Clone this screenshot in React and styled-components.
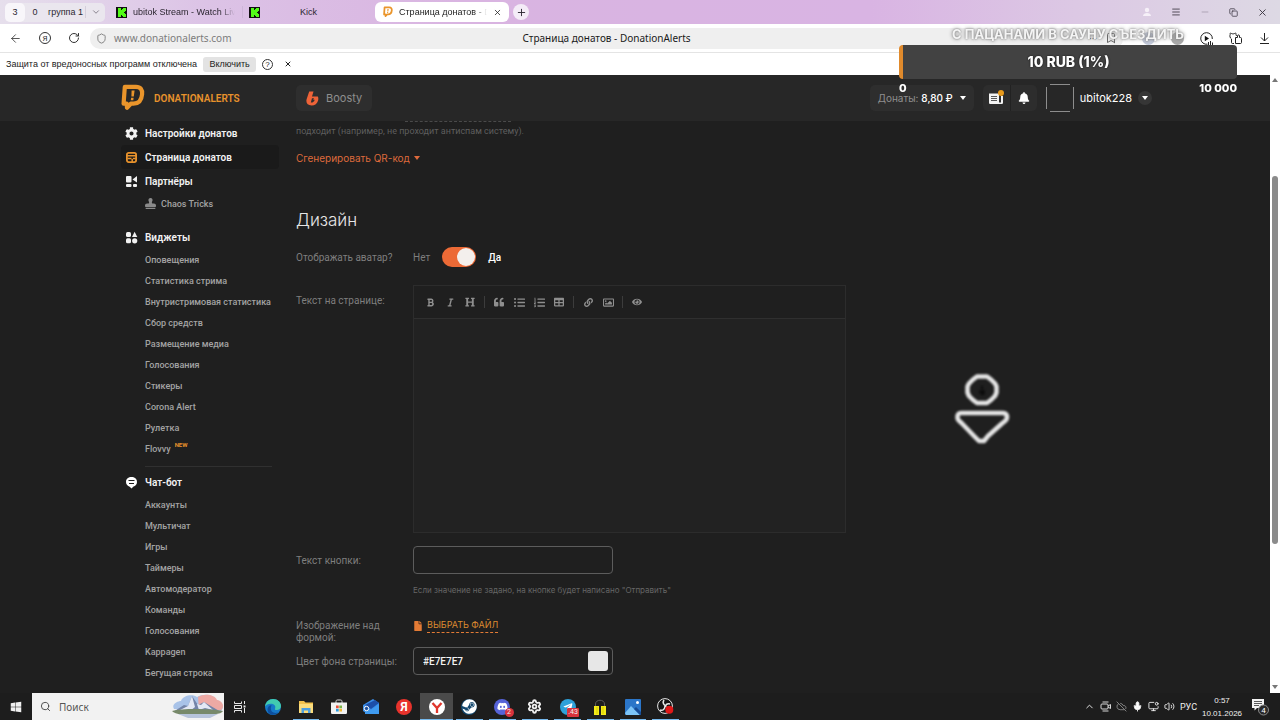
import React, { useState } from 'react';
import styled, { createGlobalStyle, css } from 'styled-components';
import {
  FaBold, FaItalic, FaHeading, FaQuoteLeft, FaListUl, FaListOl, FaTable, FaLink, FaRegImage, FaEye,
  FaCog, FaFile, FaBell, FaStamp, FaDiscord, FaSteam, FaTelegramPlane, FaWindows,
} from 'react-icons/fa';
import {
  ArrowLeft, RotateCw, Shield, X, Plus, ChevronDown, ChevronUp, Menu, Minus, Copy, Bookmark,
  Search, Mic, Volume2, CloudOff, Settings, MonitorDot,
} from 'lucide-react';

const GlobalStyle = createGlobalStyle`
  * {
    box-sizing: border-box;
  }
  body {
    margin: 0;
    background: #1f1f1f;
    font-family: Roboto, 'Liberation Sans', sans-serif;
  }
  button, input, textarea {
    font: inherit;
    color: inherit;
    margin: 0;
  }
  button {
    display: flex;
    align-items: center;
    justify-content: center;
    padding: 0;
    border: 0;
    background: none;
    cursor: pointer;
  }
  a {
    color: inherit;
    text-decoration: none;
  }
  svg {
    display: block;
    flex: none;
  }
`;

const Desktop = styled.div`
  display: flex;
  flex-direction: column;
  height: 100vh;
  overflow: hidden;
`;

/* browser */

const TabStrip = styled.div`
  display: flex;
  align-items: center;
  height: 24px;
  padding: 0 12px 0 5px;
  background: linear-gradient(90deg, #e6dfec 0%, #dcc3e6 16%, #d9b4e1 36%, #d9b4e3 68%, #dcc8e4 84%, #ddd9e4 100%);
  font-family: 'Liberation Sans', sans-serif;
  font-size: 9px;
  color: #2b2630;
`;

const TabGroup = styled.div`
  display: flex;
  align-items: center;
  height: 19px;
  width: 100px;
  margin-right: 11px;
  border-radius: 5px;
  background: #eae6ee;
`;

const GroupCount = styled.span`
  width: 20px;
  line-height: 19px;
  text-align: center;
  border-radius: 5px;
  background: ${(props) => (props.$active ? '#f8f6fa' : 'none')};
`;

const GroupName = styled.span`
  flex: 1;
  padding-left: 3px;
  white-space: nowrap;
`;

const GroupArrow = styled.button`
  width: 20px;
  height: 12px;
  border-left: 1px solid #d5cfdb;
  color: #77717d;
`;

const Tab = styled.div`
  display: flex;
  align-items: center;
  gap: 6px;
  width: ${(props) => props.$width}px;
  height: 20px;
  white-space: nowrap;
  overflow: hidden;
  ${(props) => props.$active && css`
    padding: 0 7px 0 8px;
    border-radius: 6px;
    background: #fff;
    color: #1c1c1c;
  `}
`;

const TabTitle = styled.span`
  flex: 1;
  overflow: hidden;
  text-align: ${(props) => (props.$center ? 'center' : 'left')};
  mask-image: ${(props) => (props.$fade ? 'linear-gradient(90deg, #000 85%, transparent)' : 'none')};
`;

const TabDivider = styled.span`
  width: 1px;
  height: 12px;
  margin: 0 6px 0 7px;
  background: #cdb5d8;
`;

const NewTab = styled.button`
  width: 16px;
  height: 16px;
  margin-left: 4px;
  border-radius: 50%;
  background: #f4ecf7;
`;

const WindowButtons = styled.div`
  display: flex;
  align-items: center;
  gap: 19px;
  margin-left: auto;
  color: #3a3440;
`;

const AddressBar = styled.div`
  display: flex;
  align-items: center;
  height: 29px;
  padding: 0 9px;
  background: #fff;
  border-bottom: 1px solid #e4e4e4;
  color: #222;
`;

const BarButtons = styled.div`
  display: flex;
  align-items: center;
  gap: ${(props) => props.$gap || 17}px;
  color: #333;
`;

const AddressField = styled.div`
  flex: 1;
  display: flex;
  align-items: center;
  gap: 6px;
  height: 21px;
  margin: 0 19px 0 10px;
  padding: 0 6px;
  border-radius: 10px;
  background: #efefef;
  font-family: 'Noto Sans', sans-serif;
  font-size: 10px;
`;

const Url = styled.span`
  flex: 1;
  display: flex;
  align-items: center;
  gap: 7px;
  color: #7c7c7c;
`;

const PageTitle = styled.span`
  color: #1a1a1a;
`;

const FieldTail = styled.div`
  flex: 1;
  display: flex;
  justify-content: flex-end;
  align-items: center;
  gap: 8px;
  color: #666;
`;

const Notice = styled.div`
  display: flex;
  align-items: center;
  gap: 6px;
  height: 22px;
  padding: 0 6px;
  background: #fff;
  color: #222;
  font-family: 'Liberation Sans', sans-serif;
  font-size: 9px;
`;

const NoticeButton = styled.button`
  height: 15px;
  width: 53px;
  border-radius: 3px;
  background: #e3e3e3;
`;

const HelpButton = styled.button`
  width: 11px;
  height: 11px;
  margin-right: 5px;
  border: 1px solid #333;
  border-radius: 50%;
  font-size: 8px;
  line-height: 9px;
`;

const Viewport = styled.div`
  flex: 1;
  display: flex;
  min-height: 0;
`;

const Scrollbar = styled.div`
  display: flex;
  flex-direction: column;
  align-items: center;
  width: 10px;
  padding: 3px 0 4px;
  background: #fff;
`;

const ScrollTrack = styled.div`
  flex: 1;
  display: grid;
  grid-template-rows: 93fr 366fr 140fr;
`;

const ScrollThumb = styled.div`
  grid-row: 2;
  width: 6px;
  border-radius: 3px;
  background: #8b8b8b;
`;

const Caret = styled.span`
  width: 0;
  height: 0;
  border: 3px solid transparent;
  ${(props) => (props.$up
    ? css`border-top: 0; border-bottom: 4px solid currentColor;`
    : css`border-bottom: 0; border-top: 4px solid currentColor;`)}
`;

const ScrollArrow = styled(Caret)`
  color: #777;
`;

/* site */

const Site = styled.div`
  position: relative;
  flex: 1;
  min-width: 0;
  overflow: hidden;
  background: #1f1f1f;
`;

const SiteHeader = styled.header`
  background: #272727;
`;

const HeaderInner = styled.div`
  display: flex;
  align-items: center;
  max-width: 1034px;
  height: 46px;
  margin: 0 auto;
  padding-left: 3px;
`;

const Brand = styled.a`
  display: flex;
  align-items: center;
  gap: 9px;
  width: 175px;
  color: #e8922c;
  font-size: 10px;
  font-weight: 600;
`;

const HeaderButton = styled.button`
  gap: 7px;
  height: 26px;
  padding: 0 ${(props) => (props.$large ? 10 : 8)}px;
  border-radius: 5px;
  background: #2e2e2e;
  color: #8f8f8f;
  font-family: Inter, sans-serif;
  font-size: ${(props) => (props.$large ? 11 : 10)}px;
  b {
    font-weight: 500;
    color: #fff;
  }
`;

const HeaderRight = styled.div`
  display: flex;
  align-items: center;
  gap: 9px;
  margin-left: auto;
  color: #fff;
`;

const IconPair = styled.div`
  display: flex;
  border-radius: 5px;
  background: #2d2d2d;
`;

const IconButton = styled.button`
  position: relative;
  width: 27px;
  height: 26px;
  & + & {
    border-left: 1px solid #222;
  }
`;

const NewsDot = styled.i`
  position: absolute;
  top: 5px;
  right: 6px;
  width: 6px;
  height: 6px;
  border-radius: 50%;
  background: #e89a1c;
`;

const UserButton = styled.button`
  gap: 6px;
  font-family: Inter, sans-serif;
  font-size: 11px;
`;

const CaretCircle = styled.span`
  display: flex;
  align-items: center;
  justify-content: center;
  width: 14px;
  height: 14px;
  border-radius: 50%;
  background: #363636;
`;

const Columns = styled.div`
  display: flex;
  gap: 17px;
  max-width: 1028px;
  margin: 0 auto;
`;

const Sidebar = styled.nav`
  width: 158px;
  flex: none;
`;

const NavMain = styled.a`
  display: flex;
  align-items: center;
  gap: 7px;
  height: 24px;
  padding-left: 4px;
  border-radius: 4px;
  background: ${(props) => (props.$active ? '#1a1a1a' : 'none')};
  color: #f2f2f2;
  font-size: 10px;
  font-weight: 600;
`;

const NavSub = styled.a`
  display: flex;
  align-items: center;
  gap: 5px;
  height: 21px;
  padding-left: 24px;
  color: #a3a3a3;
  font-size: 9px;
  font-weight: 500;
  white-space: nowrap;
`;

const NavGroup = styled.div`
  & + & {
    margin-top: 11px;
  }
`;

const NavLine = styled.hr`
  height: 1px;
  margin: 7px 7px 3px 24px;
  border: 0;
  background: #303030;
`;

const NewBadge = styled.sup`
  align-self: flex-start;
  margin-left: -1px;
  color: #e8922c;
  font-size: 6px;
  font-weight: 700;
  line-height: 14px;
`;

const Content = styled.main`
  flex: 1;
  color: #7e7e7e;
  font-size: 10px;
`;

const Intro = styled.p`
  margin: 0;
  padding-top: 3px;
  line-height: 12px;
  font-size: 9px;
  color: #5e5e5e;
`;

const CutLink = styled.a`
  display: block;
  width: 106px;
  margin-left: 109px;
  border-bottom: 1px dashed #4a4a4a;
`;

const QrButton = styled.button`
  gap: 4px;
  margin-top: 14px;
  height: 14px;
  color: #de6a3c;
  font-family: Inter, sans-serif;
  font-size: 10px;
`;

const Heading = styled.h2`
  margin: 43px 0 15px;
  color: #e6e6e6;
  font-family: Inter, sans-serif;
  font-size: 17px;
  font-weight: 300;
  line-height: 24px;
`;

const Field = styled.div`
  display: grid;
  grid-template-columns: 117px 1fr;
  align-items: ${(props) => (props.$top ? 'start' : 'center')};
  margin-bottom: ${(props) => props.$gap || 0}px;
`;

const Label = styled.label`
  padding: ${(props) => props.$offset || 2}px 20px 0 0;
  line-height: 12px;
  white-space: ${(props) => (props.$wrap ? 'normal' : 'nowrap')};
`;

const SwitchRow = styled.div`
  display: flex;
  align-items: center;
  gap: 12px;
  b {
    color: #fff;
    font-weight: 500;
  }
`;

const Switch = styled.input`
  appearance: none;
  display: flex;
  align-items: center;
  justify-content: flex-start;
  width: 34px;
  height: 20px;
  padding: 1px;
  border-radius: 10px;
  background: #555;
  cursor: pointer;
  &::before {
    content: '';
    width: 18px;
    height: 18px;
    border-radius: 50%;
    background: #f3efec;
  }
  &:checked {
    justify-content: flex-end;
    background: #ec6a36;
  }
`;

const Editor = styled.div`
  display: flex;
  flex-direction: column;
  max-width: 433px;
  height: 248px;
  border: 1px solid #2c2c2c;
`;

const EditorTools = styled.div`
  display: flex;
  align-items: center;
  height: 33px;
  padding-left: 6px;
  border-bottom: 1px solid #2f2f2f;
  color: #8f8f8f;
`;

const ToolButton = styled.button`
  width: 20px;
  height: 20px;
`;

const ToolDivider = styled.span`
  width: 1px;
  height: 12px;
  margin: 0 4px;
  background: #3c3c3c;
`;

const EditorText = styled.textarea`
  flex: 1;
  padding: 8px;
  border: 0;
  outline: 0;
  resize: none;
  background: #222;
`;

const TextBox = styled.div`
  display: flex;
  align-items: center;
  width: 200px;
  height: 28px;
  padding: 0 4px 0 9px;
  border: 1px solid #5c5c5c;
  border-radius: 4px;
  color: #f2f2f2;
  input {
    flex: 1;
    min-width: 0;
    padding: 0;
    border: 0;
    outline: 0;
    background: none;
    font-size: 10px;
    font-weight: 500;
  }
`;

const Swatch = styled.button`
  width: 20px;
  height: 20px;
  border-radius: 3px;
  background: ${(props) => props.$color};
`;

const Hint = styled.p`
  margin: 0 0 22px 117px;
  line-height: 12px;
  font-family: Inter, sans-serif;
  font-size: 8px;
  color: #666;
`;

const FileButton = styled.button`
  gap: 4px;
  color: #e37b35;
  font-family: Inter, sans-serif;
  span {
    border-bottom: 1px dashed #e37b35;
    color: #dd8a30;
    font-size: 9px;
    line-height: 14px;
  }
`;

const PageMark = styled.div`
  position: absolute;
  top: 298px;
  right: 259px;
  filter: blur(1px);
`;

/* stream goal, drawn over the window */

const Goal = styled.section`
  position: fixed;
  top: 26px;
  right: 43px;
  width: 338px;
  color: #fff;
  font-family: Inter, sans-serif;
  font-weight: 700;
  text-align: center;
`;

const GoalTitle = styled.div`
  color: #f4f4f4;
  font-size: 13px;
  line-height: 16px;
  margin-bottom: 3px;
  text-shadow: 0 0 2px #777, 0 0 4px #888;
`;

const GoalBar = styled.div`
  height: 34px;
  line-height: 34px;
  padding-right: 3px;
  border-left: 4px solid #e08a2c;
  border-radius: 4px;
  background: #424242;
  font-size: 14px;
  font-weight: 800;
  text-shadow: 0 0 2px #111;
`;

const GoalScale = styled.div`
  display: flex;
  justify-content: space-between;
  line-height: 18px;
  font-size: 11px;
  font-weight: 800;
`;

/* taskbar */

const Taskbar = styled.footer`
  display: flex;
  align-items: stretch;
  height: 27px;
  background: #1d1d1d;
  color: #f0f0f0;
`;

const TaskButton = styled.button`
  position: relative;
  min-width: 32px;
  background: ${(props) => (props.$active ? '#4a4a4a' : 'none')};
  ${(props) => props.$open && css`
    &::after {
      content: '';
      position: absolute;
      left: ${props.$active ? 0 : 3}px;
      right: ${props.$active ? 0 : 3}px;
      bottom: 0;
      height: 1px;
      background: #76b9ed;
    }
  `}
`;

const SearchBox = styled.label`
  display: flex;
  align-items: center;
  gap: 8px;
  width: 192px;
  padding-left: 8px;
  background: #f2f2f2;
  color: #444;
  input {
    flex: 1;
    min-width: 0;
    padding: 0;
    border: 0;
    outline: 0;
    background: none;
    font-family: 'Noto Sans', sans-serif;
    font-size: 10px;
    &::placeholder {
      color: #555;
      opacity: 1;
    }
  }
`;

const Apps = styled.div`
  display: grid;
  grid-template-columns: repeat(13, 1fr);
  width: 425px;
  margin-left: 1px;
`;

const AppDisc = styled.span`
  display: flex;
  align-items: center;
  justify-content: center;
  width: ${(props) => props.$size || 16}px;
  height: ${(props) => props.$size || 16}px;
  border-radius: 50%;
  background: ${(props) => props.$color};
  color: #fff;
  font-size: 12px;
  font-weight: 700;
`;

const AppBadge = styled.span`
  position: absolute;
  right: 5px;
  bottom: 3px;
  min-width: 9px;
  padding: 0 1px;
  border-radius: ${(props) => (props.$square ? 1 : 5)}px;
  background: #d8323c;
  font-size: 7px;
  line-height: 9px;
`;

const Tray = styled.div`
  display: flex;
  align-items: center;
  gap: 5px;
  margin-left: auto;
  padding-right: 11px;
  font-size: 9px;
`;

const Clock = styled.time`
  width: 36px;
  margin: 0 6px 0 2px;
  display: flex;
  flex-direction: column;
  align-items: center;
  font-family: 'Liberation Sans', sans-serif;
  font-size: 8px;
  line-height: 13px;
`;

const KickIcon = () => (
  <svg width="11" height="11" viewBox="0 0 11 11" aria-hidden="true">
    <rect width="11" height="11" fill="#101010" />
    <path d="M2 1h3v2h1V2h1V1h3v3H9v1H8v1h1v1h1v3H7V9H6V8H5v2H2z" fill="#53fc18" />
  </svg>
);

const DonationLogo = ({ width, height }) => (
  <svg width={width} height={height} viewBox="0 0 24 28" aria-hidden="true">
    <path
      d="M3.800 2.800H15c4.500 0 6.600 3 6.100 7.500-.5 5.600-3.300 9.400-8.600 9.400H9.800L6 23.800l-.3-4.100H2.600z"
      fill="none" stroke="#ea952b" strokeWidth="4.200" strokeLinejoin="round"
    />
    <path d="M10.600 6.500h3l-.8 6h-2.400zM10.100 13.800h2.500l-.3 2.400H9.800z" fill="#ea952b" />
  </svg>
);

const BoostyLogo = () => (
  <svg width="13" height="15" viewBox="0 0 13 15" aria-hidden="true">
    <path
      d="M3.200.6h4.300L6 5.600h5.800c.6 1 .7 2.300.3 3.800-.8 3.100-3.200 5-6.500 5C1.500 14.400-.3 11.800.6 8.300zM6 7.200l-1.200 4.400c2 .2 3.400-1 3.900-2.900H7.200L8 7.200z"
      fill="#ee6338" fillRule="evenodd"
    />
  </svg>
);

const PageIcon = () => (
  <svg width="13" height="13" viewBox="0 0 13 13" aria-hidden="true">
    <rect x="1.900" y="1.900" width="9.200" height="9.200" rx="1.800" fill="none" stroke="#e8922c" strokeWidth="1.800" />
    <path d="M2 4.800h9M2.500 7.600h4M7.800 7.600h3M7.200 8v3" stroke="#e8922c" strokeWidth="1.500" />
  </svg>
);

const PartnersIcon = () => (
  <svg width="13" height="13" viewBox="0 0 13 13" fill="#f2f2f2" aria-hidden="true">
    <rect x="1" y="1" width="5.500" height="6.500" rx="1" />
    <rect x="1" y="9" width="5.500" height="3" rx="1" />
    <rect x="8" y="9" width="4" height="3" rx="1" />
    <path d="M12 1v6.500L7.500 4.500z" />
  </svg>
);

const WidgetsIcon = () => (
  <svg width="13" height="13" viewBox="0 0 13 13" fill="#f2f2f2" aria-hidden="true">
    <rect x="1" y="1" width="5" height="5" rx="1.500" />
    <path d="M9.600.8l2.700 5.200H7z" />
    <rect x="1" y="7.300" width="5" height="5" rx="1.500" />
    <circle cx="9.700" cy="9.800" r="2.600" />
  </svg>
);

const ChatIcon = () => (
  <svg width="13" height="13" viewBox="0 0 13 13" aria-hidden="true">
    <path d="M6.500 1C9.500 1 12 2.800 12 6c0 2.600-1.700 4-3.500 4.600L6.500 12.600 4.700 10.700C2.700 10.100 1 8.600 1 6c0-3.200 2.500-5 5.500-5z" fill="#fff" />
    <path d="M3.500 4.500h6M4 7.500h5" stroke="#1f1f1f" strokeWidth="1" />
  </svg>
);

const StampIcon = () => <FaStamp size={11} color="#8a8a8a" />;

const NewsIcon = () => (
  <svg width="14" height="13" viewBox="0 0 14 13" aria-hidden="true">
    <path d="M0 1.500h10v9h2V4h2v6.500c0 1-.6 1.500-1.500 1.500h-11C.5 12 0 11.500 0 10.500z" fill="#f2f2f2" />
    <path d="M2 4.500h6M2 6.500h6M2 8.500h6" stroke="#2d2d2d" strokeWidth=".8" />
  </svg>
);

const AvatarFrame = () => (
  <svg width="28" height="28" viewBox="0 0 28 28" aria-hidden="true">
    <path d="M4 .5h20M4 27.500h20M.5 3v22M27.500 3v22" stroke="#8d8d8d" />
  </svg>
);

const PersonMark = () => (
  <svg width="58" height="74" viewBox="0 0 58 74" fill="none" stroke="#e6e6e6" strokeWidth="4.500" strokeLinejoin="round" aria-hidden="true">
    <path d="M24 3.500h10l4 3 4 4 1.500 3v6L42 23l-4 4-4 3H24l-4-3-4-4-1.500-3.500v-6L16 10.500l4-4z" />
    <path d="M8 40h42c3 0 4 2 4 4.500 0 3-3 4-5 6L35 63l-4 5h-5l-4-4L9 50.500c-2-2-4.500-3-4.500-6C4.500 42 5 40 8 40z" />
    <path d="M29 13v3M26 19h6M28 17l3 5M31 17l-3 5" stroke="#0c0c0c" strokeWidth="2" />
  </svg>
);

const SearchScene = () => (
  <svg width="52" height="26" viewBox="0 0 52 26" aria-hidden="true">
    <path d="M2 15C-1 10 6 7 9 7c2-6 12-7 16-4 7-4 17-2 19 3 6 1 9 7 5 11z" fill="#a9c3e8" />
    <path d="M26 3c7-4 17-2 19 3 6 1 8 7 4 10l-22 1z" fill="#eda9a4" />
    <path d="M1 18l11-7 4 1 4-10 6 9 6-3 17 10z" fill="#7484a8" />
    <path d="M6 17l10-5 4-10 3 11-5 4zM25 10l4 1 3-3 9 8-8-2-6 2z" fill="#e3e8f4" />
    <path d="M0 17c12-3 40-2 51 0-2 4-12 3-25 4C14 21 3 21 0 17z" fill="#77896a" />
    <path d="M6 20h40l-8 4H16z" fill="#b6c3da" />
  </svg>
);

const TaskViewIcon = () => (
  <svg width="12" height="12" viewBox="0 0 12 12" fill="none" stroke="#e8e8e8" aria-hidden="true">
    <path d="M.5.5v2h7v-2M.5 11.500v-2h7v2M.5 4.500h7v3h-7zM10.500 0v3M10.500 7v5" />
    <rect x="9.500" y="4.500" width="2" height="2" fill="#e8e8e8" stroke="none" />
  </svg>
);

const EdgeIcon = () => (
  <svg width="16" height="16" viewBox="0 0 16 16" aria-hidden="true">
    <circle cx="8" cy="8" r="8" fill="#1679c9" />
    <path d="M0 7.500C.5 3 4 0 8 0c5 0 8 3.500 8 7 0 2.500-2 4-4.500 4-1.500 0-2-.8-1.400-1.600C11 7 9 4.800 6 4.800c-3 0-5 1.400-6 2.700z" fill="#41cbb0" />
    <path d="M6 8c-1 4 2 7 7 5.500C10 17 3 16.500 2.500 11 2.300 8.500 4 6.500 6.500 6z" fill="#0d4f9e" />
  </svg>
);

const FolderIcon = () => (
  <svg width="16" height="14" viewBox="0 0 16 14" aria-hidden="true">
    <path d="M1 1h5l1.500 1.500H15V12H1z" fill="#f2c14d" />
    <path d="M1 4h14v9H1z" fill="#fbdc7c" />
    <path d="M3.500 13V8h9v5H10v-2.500H6V13z" fill="#4d9fe0" />
  </svg>
);

const StoreIcon = () => (
  <svg width="16" height="16" viewBox="0 0 16 16" aria-hidden="true">
    <path d="M5 4V2.500C5 1.500 5.500 1 6.500 1h3c1 0 1.500.5 1.500 1.500V4" fill="none" stroke="#ddd" />
    <path d="M0 3.500h16v10c0 1-.6 1.500-1.500 1.500h-13C.5 15 0 14.500 0 13.500z" fill="#f1f1f1" />
    <path d="M5 6.500h2.700v2.700H5z" fill="#e8503a" />
    <path d="M8.300 6.500H11v2.700H8.300z" fill="#7ab648" />
    <path d="M5 9.800h2.700v2.700H5z" fill="#2a9be0" />
    <path d="M8.300 9.800H11v2.700H8.300z" fill="#f3b72f" />
  </svg>
);

const MailIcon = () => (
  <svg width="16" height="15" viewBox="0 0 16 15" aria-hidden="true">
    <path d="M0 6l10-6 6 4v10H3L0 12z" fill="#3c8ee8" />
    <path d="M2 6l10-5 4 3-8 6z" fill="#1d4fa8" />
    <path d="M2 8l6 3 8-6v10H2z" fill="#3f9bf0" />
    <circle cx="3.500" cy="9.500" r="2.200" fill="#1c4f9c" stroke="#fff" />
  </svg>
);

const YandexBrowserIcon = () => (
  <svg width="16" height="16" viewBox="0 0 16 16" aria-hidden="true">
    <circle cx="8" cy="8" r="8" fill="#fff" />
    <path d="M3.500 4L8 9l4.500-5M8 8.500V14" fill="none" stroke="#e0362c" strokeWidth="2.300" />
  </svg>
);

const HeadphonesIcon = () => (
  <svg width="12" height="16" viewBox="0 0 12 16" aria-hidden="true">
    <path d="M1.500 8V5c0-5 9-5 9 0v3" fill="none" stroke="#5a5a5a" />
    <path d="M0 7h5v9H0zM7 7h5v9H7z" fill="#f3ea19" />
    <path d="M3 8v7M9 8v7" stroke="#d3cb00" />
  </svg>
);

const PhotosIcon = () => (
  <svg width="16" height="16" viewBox="0 0 16 16" aria-hidden="true">
    <rect width="16" height="16" rx="1" fill="#2b76c9" />
    <path d="M0 14l6-7 9 9H1z" fill="#7cc4f7" />
    <path d="M9 10l2-2 5 5v3h-1z" fill="#174d96" />
    <circle cx="12.500" cy="3.500" r="1.500" fill="#fff" />
  </svg>
);

const ObsIcon = () => (
  <svg width="17" height="17" viewBox="0 0 17 17" aria-hidden="true">
    <circle cx="8" cy="8" r="7.400" fill="#151515" stroke="#e8e8e8" />
    <path d="M7 2c-2 3 0 5 2 6M13 6c-3-1-5 1-4 3M3 12c3 1 5-1 5-4" fill="none" stroke="#e8e8e8" strokeWidth="1.600" />
    <circle cx="12.300" cy="11.800" r="4" fill="#e01818" />
  </svg>
);

const YaIcon = () => (
  <svg width="12" height="12" viewBox="0 0 12 12" aria-hidden="true">
    <circle cx="6" cy="6" r="5.500" fill="none" stroke="#333" />
    <text x="6" y="9" textAnchor="middle" fontSize="8" fill="#333">Я</text>
  </svg>
);

const PlayIcon = () => (
  <svg width="13" height="13" viewBox="0 0 13 13" aria-hidden="true">
    <path d="M7.500 12.200A5.800 5.800 0 1 1 12.300 7" fill="none" stroke="#222" />
    <path d="M4.800 3.800L9 6.500 4.800 9.200z" fill="#111" />
    <path d="M8.500 10v3M10.500 9v4M12.500 10.500V13" stroke="#222" />
  </svg>
);

const ExtensionsIcon = () => (
  <svg width="13" height="13" viewBox="0 0 13 13" fill="none" stroke="#222" aria-hidden="true">
    <path d="M5 11.500H3.500c-.6 0-1-.4-1-1V7C1 6 .5 4 1.200 2.500.6 1.500 1.500.5 2.500 1.500c1 .5 2 .5 3 0 1-1 2 0 1.500 1L7.500 4" />
    <path d="M6.500 5.500h2V4c0-1.500 2-1.500 2 0v1.500h1c.6 0 1 .4 1 1v4c0 .6-.4 1-1 1h-5z" />
  </svg>
);

const DownloadIcon = () => (
  <svg width="13" height="13" viewBox="0 0 13 13" fill="none" stroke="#222" aria-hidden="true">
    <path d="M6.500 1v8M3 5.500L6.500 9 10 5.500M2 11.500h9" />
  </svg>
);

const ShareScreenIcon = () => (
  <svg width="11" height="11" viewBox="0 0 11 11" fill="none" stroke="#d8d8d8" aria-hidden="true">
    <path d="M2.500 1h6M2.500 10h6" />
    <rect x="1" y="3" width="7" height="5" rx="1" />
    <path d="M8 5l2.500-1.500v4L8 6" />
  </svg>
);

const UserIcon = () => (
  <svg width="10" height="10" viewBox="0 0 10 10" fill="#f6f0f8" aria-hidden="true">
    <circle cx="5" cy="3" r="2.200" />
    <path d="M1 9c0-4 8-4 8 0z" />
  </svg>
);

const NotifyIcon = () => (
  <svg width="18" height="18" viewBox="0 0 18 18" aria-hidden="true">
    <path d="M1 1h12v9H6l-2.500 2.500V10H1z" fill="#f4f4f4" />
    <path d="M3 3.500h8M3 5.500h8M3 7.500h5" stroke="#333" strokeWidth=".8" />
    <circle cx="12.500" cy="12" r="5" fill="#2a2a2a" stroke="#8a8a8a" />
    <text x="12.500" y="15" textAnchor="middle" fontSize="8" fill="#fff">4</text>
  </svg>
);

const widgets = [
  'Оповещения', 'Статистика стрима', 'Внутристримовая статистика', 'Сбор средств', 'Размещение медиа',
  'Голосования', 'Стикеры', 'Corona Alert', 'Рулетка',
];

const botItems = [
  'Аккаунты', 'Мультичат', 'Игры', 'Таймеры', 'Автомодератор', 'Команды', 'Голосования', 'Kappagen', 'Бегущая строка',
];

const editorGroups = [
  [['Жирный', FaBold, 9], ['Курсив', FaItalic, 9], ['Заголовок', FaHeading, 10]],
  [['Цитата', FaQuoteLeft, 10], ['Список', FaListUl, 11], ['Нумерованный список', FaListOl, 11], ['Таблица', FaTable, 10]],
  [['Ссылка', FaLink, 9], ['Изображение', FaRegImage, 11]],
  [['Просмотр', FaEye, 10]],
];

const apps = [
  { name: 'Edge', icon: <EdgeIcon /> },
  { name: 'Проводник', icon: <FolderIcon />, open: true },
  { name: 'Store', icon: <StoreIcon /> },
  { name: 'Почта', icon: <MailIcon /> },
  { name: 'Яндекс', icon: <AppDisc $color="#e8332c">Я</AppDisc> },
  { name: 'Браузер', icon: <YandexBrowserIcon />, open: true, active: true },
  { name: 'Steam', icon: <AppDisc $color="#12476e"><FaSteam size={15} /></AppDisc>, open: true },
  { name: 'Discord', icon: <AppDisc $color="#5663d8"><FaDiscord size={11} /></AppDisc>, open: true, badge: '2' },
  { name: 'Параметры', icon: <Settings size={15} strokeWidth={3} />, open: true },
  { name: 'Telegram', icon: <AppDisc $color="#2ea1d9"><FaTelegramPlane size={10} /></AppDisc>, open: true, badge: '.43', square: true },
  { name: 'Наушники', icon: <HeadphonesIcon />, open: true },
  { name: 'Фотографии', icon: <PhotosIcon />, open: true },
  { name: 'OBS', icon: <ObsIcon />, open: true },
];

const Browser = () => (
  <>
    <TabStrip>
      <TabGroup>
        <GroupCount $active>3</GroupCount>
        <GroupCount>0</GroupCount>
        <GroupName>группа 1</GroupName>
        <GroupArrow aria-label="Группы"><ChevronDown size={10} /></GroupArrow>
      </TabGroup>
      <Tab $width={119}>
        <KickIcon />
        <TabTitle $fade>ubitok Stream - Watch Live</TabTitle>
      </Tab>
      <TabDivider />
      <Tab $width={102}>
        <KickIcon />
        <TabTitle $center>Kick</TabTitle>
      </Tab>
      <span style={{ width: 24 }} />
      <Tab $width={134} $active>
        <DonationLogo width={10} height={12} />
        <TabTitle $fade>Страница донатов - Do</TabTitle>
        <X size={9} />
      </Tab>
      <NewTab aria-label="Новая вкладка"><Plus size={11} /></NewTab>
      <WindowButtons>
        <UserIcon />
        <button aria-label="Меню"><Menu size={10} /></button>
        <button aria-label="Свернуть"><Minus size={10} color="#a79cae" /></button>
        <button aria-label="Развернуть"><Copy size={9} /></button>
        <button aria-label="Закрыть"><X size={11} /></button>
      </WindowButtons>
    </TabStrip>
    <AddressBar>
      <BarButtons>
        <button aria-label="Назад"><ArrowLeft size={13} strokeWidth={1.5} /></button>
        <button aria-label="Яндекс"><YaIcon /></button>
        <button aria-label="Обновить"><RotateCw size={12} /></button>
      </BarButtons>
      <AddressField>
        <Url><Shield size={11} />www.donationalerts.com</Url>
        <PageTitle>Страница донатов - DonationAlerts</PageTitle>
        <FieldTail>
          <span>···</span>
          <Bookmark size={12} />
        </FieldTail>
      </AddressField>
      <BarButtons $gap={16}>
        <AppDisc $color="#c3cadb" $size={13} />
        <AppDisc $color="#a9a9a9" $size={13} />
        <button aria-label="Видео"><PlayIcon /></button>
        <button aria-label="Расширения"><ExtensionsIcon /></button>
        <button aria-label="Загрузки"><DownloadIcon /></button>
      </BarButtons>
    </AddressBar>
    <Notice>
      <span>Защита от вредоносных программ отключена</span>
      <NoticeButton>Включить</NoticeButton>
      <HelpButton>?</HelpButton>
      <button aria-label="Закрыть"><X size={8} strokeWidth={3} /></button>
    </Notice>
  </>
);

const Header = () => (
  <SiteHeader>
    <HeaderInner>
      <Brand href="#">
        <DonationLogo width={24} height={28} />
        DONATIONALERTS
      </Brand>
      <HeaderButton $large>
        <BoostyLogo />
        Boosty
      </HeaderButton>
      <HeaderRight>
        <HeaderButton>
          <span>Донаты: <b>8,80 ₽</b></span>
          <b><Caret as="i" style={{ display: 'block' }} /></b>
        </HeaderButton>
        <IconPair>
          <IconButton aria-label="Новости"><NewsIcon /><NewsDot /></IconButton>
          <IconButton aria-label="Уведомления"><FaBell size={12} /></IconButton>
        </IconPair>
        <UserButton>
          <AvatarFrame />
          ubitok228
          <CaretCircle><Caret /></CaretCircle>
        </UserButton>
      </HeaderRight>
    </HeaderInner>
  </SiteHeader>
);

const SideMenu = () => (
  <Sidebar>
    <NavGroup>
      <NavMain href="#"><FaCog size={13} />Настройки донатов</NavMain>
      <NavMain href="#" $active><PageIcon />Страница донатов</NavMain>
      <NavMain href="#"><PartnersIcon />Партнёры</NavMain>
      <NavSub href="#"><StampIcon />Chaos Tricks</NavSub>
    </NavGroup>
    <NavGroup>
      <NavMain href="#"><WidgetsIcon />Виджеты</NavMain>
      {widgets.map((item) => (
        <NavSub href="#" key={item}>{item}</NavSub>
      ))}
      <NavSub href="#">Flovvy<NewBadge>NEW</NewBadge></NavSub>
    </NavGroup>
    <NavLine />
    <NavMain href="#"><ChatIcon />Чат-бот</NavMain>
    {botItems.map((item) => (
      <NavSub href="#" key={item}>{item}</NavSub>
    ))}
  </Sidebar>
);

const DesignForm = () => {
  const [showAvatar, setShowAvatar] = useState(true);
  const [text, setText] = useState('');
  const [buttonText, setButtonText] = useState('');
  const [color, setColor] = useState('#E7E7E7');

  return (
    <Content>
      <CutLink href="#" />
      <Intro>подходит (например, не проходит антиспам систему).</Intro>
      <QrButton>Сгенерировать QR-код <Caret /></QrButton>
      <Heading>Дизайн</Heading>
      <Field $gap={18}>
        <Label htmlFor="avatar">Отображать аватар?</Label>
        <SwitchRow>
          <span>Нет</span>
          <Switch id="avatar" type="checkbox" checked={showAvatar} onChange={(e) => setShowAvatar(e.target.checked)} />
          <b>Да</b>
        </SwitchRow>
      </Field>
      <Field $top $gap={13}>
        <Label htmlFor="text" $offset={10}>Текст на странице:</Label>
        <Editor>
          <EditorTools>
            {editorGroups.map((group, index) => (
              <React.Fragment key={index}>
                {index > 0 && <ToolDivider />}
                {group.map(([name, Icon, size]) => (
                  <ToolButton key={name} aria-label={name}><Icon size={size} /></ToolButton>
                ))}
              </React.Fragment>
            ))}
          </EditorTools>
          <EditorText id="text" value={text} onChange={(e) => setText(e.target.value)} />
        </Editor>
      </Field>
      <Field $gap={10}>
        <Label htmlFor="button-text">Текст кнопки:</Label>
        <TextBox>
          <input id="button-text" value={buttonText} onChange={(e) => setButtonText(e.target.value)} />
        </TextBox>
      </Field>
      <Hint>Если значение не задано, на кнопке будет написано "Отправить"</Hint>
      <Field $top $gap={3}>
        <Label as="span" $wrap>Изображение над формой:</Label>
        <SwitchRow>
          <FileButton><FaFile size={10} /><span>ВЫБРАТЬ ФАЙЛ</span></FileButton>
        </SwitchRow>
      </Field>
      <Field>
        <Label htmlFor="color">Цвет фона страницы:</Label>
        <TextBox>
          <input id="color" value={color} onChange={(e) => setColor(e.target.value)} />
          <Swatch $color={color} aria-label="Выбрать цвет" />
        </TextBox>
      </Field>
    </Content>
  );
};

const App = () => (
  <Desktop>
    <GlobalStyle />
    <Browser />
    <Viewport>
      <Site>
        <Header />
        <Columns>
          <SideMenu />
          <DesignForm />
        </Columns>
        <PageMark><PersonMark /></PageMark>
      </Site>
      <Scrollbar>
        <ScrollArrow $up />
        <ScrollTrack><ScrollThumb /></ScrollTrack>
        <ScrollArrow />
      </Scrollbar>
    </Viewport>
    <Taskbar>
      <TaskButton aria-label="Пуск"><FaWindows size={12} /></TaskButton>
      <SearchBox>
        <Search size={11} />
        <input placeholder="Поиск" aria-label="Поиск" />
        <SearchScene />
      </SearchBox>
      <TaskButton aria-label="Представление задач"><TaskViewIcon /></TaskButton>
      <Apps>
        {apps.map((app) => (
          <TaskButton key={app.name} aria-label={app.name} $open={app.open} $active={app.active}>
            {app.icon}
            {app.badge && <AppBadge $square={app.square}>{app.badge}</AppBadge>}
          </TaskButton>
        ))}
      </Apps>
      <Tray>
        <ChevronUp size={11} />
        <ShareScreenIcon />
        <CloudOff size={11} color="#888" />
        <Mic size={11} fill="#fff" />
        <MonitorDot size={11} />
        <Volume2 size={11} />
        <span>РУС</span>
        <Clock>
          <span>0:57</span>
          <span>10.01.2026</span>
        </Clock>
        <NotifyIcon />
      </Tray>
    </Taskbar>
    <Goal>
      <GoalTitle>С ПАЦАНАМИ В САУНУ СЪЕЗДИТЬ</GoalTitle>
      <GoalBar>10 RUB (1%)</GoalBar>
      <GoalScale>
        <span>0</span>
        <span>10 000</span>
      </GoalScale>
    </Goal>
  </Desktop>
);

export default App;
